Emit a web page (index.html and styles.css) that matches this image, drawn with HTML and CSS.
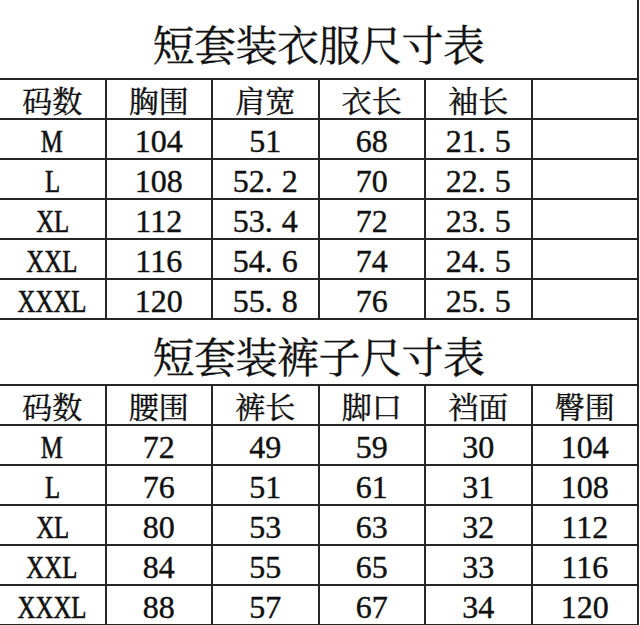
FILE: index.html
```html
<!DOCTYPE html>
<html lang="zh-CN">
<head>
<meta charset="utf-8">
<title>短套装尺寸表</title>
<link rel="stylesheet" href="styles.css">
</head>
<body>
<div class="sheet">
  <div class="title title-top">短套装衣服尺寸表</div>
  <div class="row head">
    <div class="cell">码数</div><div class="cell">胸围</div><div class="cell">肩宽</div><div class="cell">衣长</div><div class="cell">袖长</div><div class="cell"></div>
  </div>
  <div class="row">
    <div class="cell size"><span>M</span></div><div class="cell num">104</div><div class="cell num">51</div><div class="cell num">68</div><div class="cell num">21<span class="dot">.</span>5</div><div class="cell"></div>
  </div>
  <div class="row">
    <div class="cell size"><span>L</span></div><div class="cell num">108</div><div class="cell num">52<span class="dot">.</span>2</div><div class="cell num">70</div><div class="cell num">22<span class="dot">.</span>5</div><div class="cell"></div>
  </div>
  <div class="row">
    <div class="cell size"><span>XL</span></div><div class="cell num">112</div><div class="cell num">53<span class="dot">.</span>4</div><div class="cell num">72</div><div class="cell num">23<span class="dot">.</span>5</div><div class="cell"></div>
  </div>
  <div class="row">
    <div class="cell size"><span>XXL</span></div><div class="cell num">116</div><div class="cell num">54<span class="dot">.</span>6</div><div class="cell num">74</div><div class="cell num">24<span class="dot">.</span>5</div><div class="cell"></div>
  </div>
  <div class="row">
    <div class="cell size"><span>XXXL</span></div><div class="cell num">120</div><div class="cell num">55<span class="dot">.</span>8</div><div class="cell num">76</div><div class="cell num">25<span class="dot">.</span>5</div><div class="cell"></div>
  </div>

  <div class="title title-mid">短套装裤子尺寸表</div>
  <div class="row head">
    <div class="cell">码数</div><div class="cell">腰围</div><div class="cell">裤长</div><div class="cell">脚口</div><div class="cell">裆面</div><div class="cell">臀围</div>
  </div>
  <div class="row">
    <div class="cell size"><span>M</span></div><div class="cell num">72</div><div class="cell num">49</div><div class="cell num">59</div><div class="cell num">30</div><div class="cell num">104</div>
  </div>
  <div class="row">
    <div class="cell size"><span>L</span></div><div class="cell num">76</div><div class="cell num">51</div><div class="cell num">61</div><div class="cell num">31</div><div class="cell num">108</div>
  </div>
  <div class="row">
    <div class="cell size"><span>XL</span></div><div class="cell num">80</div><div class="cell num">53</div><div class="cell num">63</div><div class="cell num">32</div><div class="cell num">112</div>
  </div>
  <div class="row">
    <div class="cell size"><span>XXL</span></div><div class="cell num">84</div><div class="cell num">55</div><div class="cell num">65</div><div class="cell num">33</div><div class="cell num">116</div>
  </div>
  <div class="row">
    <div class="cell size"><span>XXXL</span></div><div class="cell num">88</div><div class="cell num">57</div><div class="cell num">67</div><div class="cell num">34</div><div class="cell num">120</div>
  </div>
</div>
</body>
</html>
```

FILE: styles.css
```css
html, body {
  margin: 0;
  padding: 0;
  background: #ffffff;
}

body {
  width: 640px;
  height: 625px;
  overflow: hidden;
  color: #111111;
  font-family: "Noto Serif CJK SC", "Noto Sans CJK SC", "Liberation Serif", serif;
}

.sheet {
  width: 639px;
  display: flex;
  flex-direction: column;
}

.title {
  box-sizing: border-box;
  border-right: 2px solid #262626;
  border-bottom: 2px solid #262626;
  display: flex;
  align-items: center;
  justify-content: center;
  font-size: 42px;
  line-height: 1;
  letter-spacing: -0.5px;
  -webkit-text-stroke: 0.3px #111111;
}

.title-top {
  height: 80px;
  padding-top: 7px;
}

.title-mid {
  height: 66px;
  padding-top: 6px;
}

.row {
  display: grid;
  grid-template-columns: repeat(6, 1fr);
  height: 40px;
}

.cell {
  box-sizing: border-box;
  border-right: 2px solid #262626;
  border-bottom: 2px solid #262626;
  display: flex;
  align-items: center;
  justify-content: center;
  line-height: 1;
}

.head .cell {
  font-size: 30px;
  -webkit-text-stroke: 0.4px #111111;
}

.num {
  font-family: "Liberation Serif", "Times New Roman", serif;
  font-size: 32px;
  padding-top: 4px;
  -webkit-text-stroke: 0.4px #111111;
}

.dot {
  margin-right: 9px;
}

.size {
  font-family: "Liberation Serif", "Times New Roman", serif;
  font-size: 31px;
  padding-top: 4px;
  -webkit-text-stroke: 0.6px #111111;
}

.size span {
  display: inline-block;
  transform: scaleX(0.8);
}
```
